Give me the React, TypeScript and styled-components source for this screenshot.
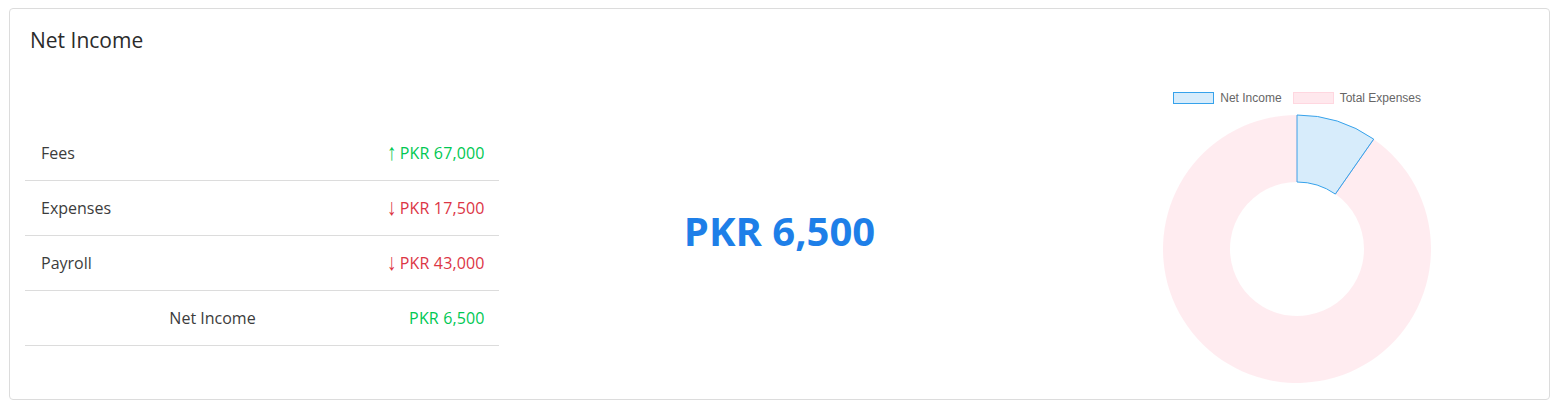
import React from 'react'
import styled, { createGlobalStyle } from 'styled-components';

const GlobalStyle = createGlobalStyle`
    body {
        margin: 8px;
        background: #fff;
        font-family: "Open Sans", "Noto Sans", sans-serif;
    }
`;

type Row = {
    label: string;
    amount: string;
    trend?: 'up' | 'down';
};

const rows: Row[] = [
    { label: 'Fees', amount: 'PKR 67,000', trend: 'up' },
    { label: 'Expenses', amount: 'PKR 17,500', trend: 'down' },
    { label: 'Payroll', amount: 'PKR 43,000', trend: 'down' },
];

const green = '#00c853';
const red = '#dc3545';
const chartBlue = 'rgb(54, 162, 235)';

// doughnut geometry
const R = 134;
const r = 67;
const share = 6500 / 67000;

const point = (radius: number, frac: number) => {
    const a = frac * Math.PI * 2;
    return [R + radius * Math.sin(a), R - radius * Math.cos(a)];
};

const Doughnut: React.FC = () => {
    const [ox, oy] = point(R, share);
    const [ix, iy] = point(r, share);
    const blue = `M${R} 0 A${R} ${R} 0 0 1 ${ox} ${oy} L${ix} ${iy} A${r} ${r} 0 0 0 ${R} ${R - r} Z`;
    const pink = `M${ox} ${oy} A${R} ${R} 0 1 1 ${R} 0 L${R} ${R - r} A${r} ${r} 0 1 0 ${ix} ${iy} Z`;
    return (
        <svg width={270} height={270} viewBox="-1 -1 270 270">
            <path d={blue} fill="rgba(54,162,235,0.2)" stroke={chartBlue} strokeWidth={1} />
            <path d={pink} fill="rgba(255,99,132,0.12)" stroke="none" />
            <line x1={ox} y1={oy} x2={ix} y2={iy} stroke="rgba(54,162,235,0.45)" strokeWidth={1} />
        </svg>
    );
};

export default function App() {
    return (
        <>
            <GlobalStyle />
            <Card>
                <CardHeader>
                    <CardTitle>Net Income</CardTitle>
                </CardHeader>
                <CardBody>
                    <Table>
                        {rows.map(row => (
                            <TableRow key={row.label}>
                                <Label>{row.label}</Label>
                                <Amount $color={row.trend === 'up' ? green : red}>
                                    <Arrow>{row.trend === 'up' ? '↑' : '↓'}</Arrow>
                                    {row.amount}
                                </Amount>
                            </TableRow>
                        ))}
                        <TableRow>
                            <Label $total>Net Income</Label>
                            <Amount $color={green}>PKR 6,500</Amount>
                        </TableRow>
                    </Table>
                    <Total>PKR 6,500</Total>
                    <ChartColumn>
                        <Legend>
                            <LegendItem>
                                <LegendBox $fill="rgba(54,162,235,0.2)" $border={chartBlue} />
                                Net Income
                            </LegendItem>
                            <LegendItem>
                                <LegendBox $fill="rgba(255,99,132,0.15)" $border="rgba(255,99,132,0.12)" />
                                Total Expenses
                            </LegendItem>
                        </Legend>
                        <ChartWrap>
                            <Doughnut />
                        </ChartWrap>
                    </ChartColumn>
                </CardBody>
            </Card>
        </>
    );
}

const Card = styled.div`
    margin-left: 1px;
    border: 1px solid #dcdcdc;
    border-radius: 4px;
    background: #fff;
    padding: 0 15px 15px;
`;

const CardHeader = styled.div`
    padding: 19px 5px 0;
`;

const CardTitle = styled.h5`
    margin: 0;
    font-size: 21px;
    line-height: 24px;
    font-weight: 400;
    color: #2b2b2b;
`;

const CardBody = styled.div`
    display: grid;
    grid-template-columns: repeat(3, 1fr);
    column-gap: 44px;
    align-items: start;
`;

const Table = styled.div`
    margin-top: 74px;
`;

const TableRow = styled.div`
    display: flex;
    align-items: center;
    justify-content: space-between;
    height: 54px;
    border-bottom: 1px solid #dcdcdc;
    font-size: 16px;
`;

const Label = styled.span<{ $total?: boolean }>`
    color: #3c3c3c;
    padding-left: ${({ $total }) => $total ? '0' : '16px'};
    width: ${({ $total }) => $total ? '375px' : 'auto'};
    text-align: ${({ $total }) => $total ? 'center' : 'left'};
`;

const Amount = styled.span<{ $color: string }>`
    color: ${({ $color }) => $color};
    padding-right: 14px;
    white-space: nowrap;
    letter-spacing: 0.15px;
`;

const Arrow = styled.span`
    display: inline-block;
    font-size: 23px;
    line-height: 16px;
    margin-right: 2px;
    transform: translateY(1px) scaleX(0.8);
`;

const Total = styled.div`
    margin-top: 152px;
    text-align: center;
    font-size: 40px;
    line-height: 54px;
    font-weight: 700;
    color: #1e7fe8;
`;

const ChartColumn = styled.div`
    margin-top: 40px;
    display: flex;
    flex-direction: column;
    align-items: center;
`;

const Legend = styled.div`
    display: flex;
    gap: 11px;
    height: 12px;
    font-family: "Liberation Sans", Arial, sans-serif;
    font-size: 12px;
    line-height: 12px;
    color: #666;
`;

const LegendItem = styled.div`
    display: flex;
    align-items: center;
    gap: 6px;
`;

const LegendBox = styled.span<{ $fill: string; $border: string }>`
    box-sizing: border-box;
    width: 41px;
    height: 12px;
    background: ${({ $fill }) => $fill};
    border: 1px solid ${({ $border }) => $border};
`;

const ChartWrap = styled.div`
    margin-top: 10px;
    line-height: 0;
`;
